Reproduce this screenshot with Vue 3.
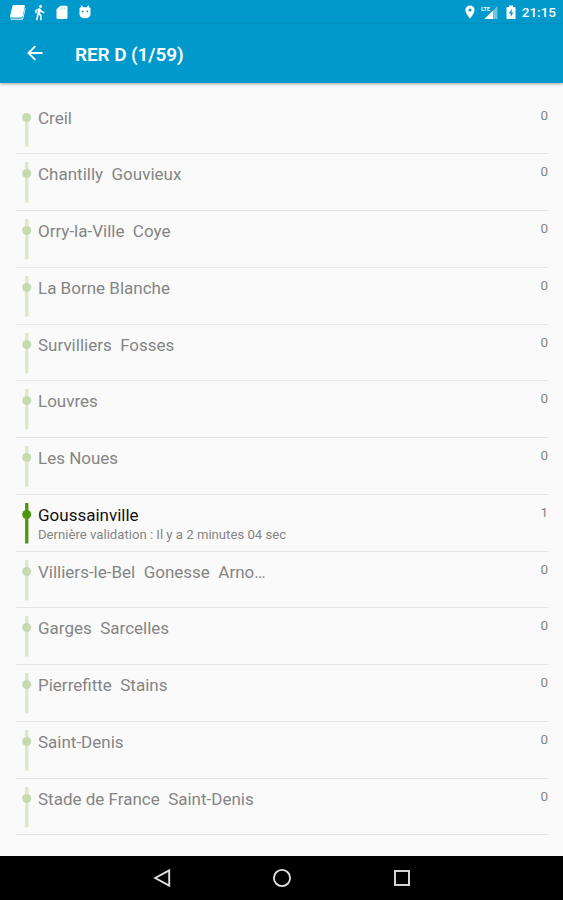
<template>
  <div class="screen">
    <div class="status-bar">
      <div class="status-left">
        <svg class="ic-book" viewBox="0 0 17 17">
          <path d="M4.6 1h10.200q1.200 0 1 1.200l-2.200 10.400q-.3 1-1.300 1H2q-1.200 0-1-1.200L3.400 2q.2-1 1.200-1z" fill="#fff"/>
          <path d="M16 3.400l-2.300 10.100q-.4 1.300-1.600 1.300H1.400q.2 1 1.200 1h10.200q1.200 0 1.500-1.200l2.300-10q.2-.8-.6-1.200z" fill="#eaf6fb"/>
          <path d="M1.600 14h10.600q1 0 1.300-1" fill="none" stroke="#8acce6" stroke-width=".7"/>
        </svg>
        <svg class="ic-walk" viewBox="0 0 24 24" fill="#fff">
          <path d="M13.500 5.500c1.100 0 2-.9 2-2s-.9-2-2-2-2 .9-2 2 .9 2 2 2zM9.800 8.900L7 23h2.100l1.800-8 2.100 2v6h2v-7.500l-2.100-2 .6-3C14.800 12 16.800 13 19 13v-2c-1.900 0-3.500-1-4.300-2.400l-1-1.600c-.4-.6-1-1-1.700-1-.3 0-.5.100-.8.100L6 8.300V13h2V9.600l1.800-.7"/>
        </svg>
        <svg class="ic-sd" viewBox="0 0 12 15">
          <path d="M4.200.8h6q1.300 0 1.300 1.300v10.600q0 1.300-1.300 1.300H1.800Q.5 14 .5 12.700V4.500z" fill="#fff"/>
          <path d="M4.600 2.400v2M6.700 2.400v2M8.800 2.400v2" stroke="#8acce6" stroke-width=".8"/>
        </svg>
        <svg class="ic-droid" viewBox="0 0 12 14">
          <path d="M2.300.6l1.300 2.200M9.700.6L8.400 2.800" stroke="#fff" stroke-width="1.300"/>
          <path d="M.5 3.600Q.8 2.300 2.300 2.300h7.400q1.500 0 1.800 1.300v6Q11 13.200 6 13.200T.5 9.600z" fill="#fff"/>
          <circle cx="3.700" cy="6.400" r=".9" fill="#0099cc"/>
          <circle cx="8.300" cy="6.400" r=".9" fill="#0099cc"/>
        </svg>
      </div>
      <div class="status-right">
        <svg class="ic-pin" viewBox="0 0 10 14">
          <path d="M5 .4C2.400.4.4 2.400.4 5c0 3.300 4.600 8.600 4.600 8.600S9.600 8.300 9.600 5C9.600 2.400 7.600.4 5 .4z" fill="#fff"/>
          <circle cx="5" cy="5" r="1.600" fill="#0099cc"/>
        </svg>
        <svg class="ic-signal" viewBox="0 0 17 15">
          <path d="M16.500 1v13h-13z" fill="#6cc2e1"/>
          <path d="M12 5.500V14H3.500z" fill="#fff"/>
          <text x="0" y="5.600">LTE</text>
        </svg>
        <svg class="ic-battery" viewBox="0 0 10 15">
          <path d="M3 .6h4V2h1.700q.8 0 .8.8v10.400q0 .8-.8.800H1.300q-.8 0-.8-.8V2.800q0-.8.800-.8H3z" fill="#fff"/>
          <path d="M5.700 4L2.800 8.500h1.900V12l2.700-4.600H5.700z" fill="#0099cc"/>
        </svg>
        <span class="clock">21:15</span>
      </div>
    </div>

    <header class="toolbar">
      <button class="back" aria-label="Retour">
        <svg viewBox="0 0 16 16" fill="none" stroke="#fff" stroke-width="1.900">
          <path d="M15.500 8H1.800M8.300 1.200L1.500 8l6.800 6.800"/>
        </svg>
      </button>
      <h1>RER D (1/59)</h1>
    </header>

    <ul class="stations">
      <li
        v-for="(s, i) in stations"
        :key="s.name"
        class="station"
        :class="{ visited: s.count > 0 }"
      >
        <!-- the line starts at the first stop, so no rail above it -->
        <svg class="track" viewBox="0 0 10 56">
          <rect x="3.100" :y="i === 0 ? 19.500 : 8" width="3.300" :height="i === 0 ? 29 : 40.500" class="rail"/>
          <circle cx="4.700" cy="19.500" r="4.500" class="stop"/>
        </svg>
        <div class="info">
          <span class="name">{{ s.name }}</span>
          <span v-if="s.last" class="last">Dernière validation : {{ s.last }}</span>
        </div>
        <span class="count">{{ s.count }}</span>
      </li>
    </ul>

    <nav class="nav-bar">
      <svg viewBox="0 0 20 20"><path d="M17.200 2.300v15.400L3.200 10z"/></svg>
      <svg viewBox="0 0 20 20"><circle cx="10" cy="10" r="8.100"/></svg>
      <svg viewBox="0 0 20 20"><rect x="3" y="3" width="14" height="14"/></svg>
    </nav>
  </div>
</template>

<script setup>
const stations = [
  { name: 'Creil', count: 0 },
  { name: 'Chantilly  Gouvieux', count: 0 },
  { name: 'Orry-la-Ville  Coye', count: 0 },
  { name: 'La Borne Blanche', count: 0 },
  { name: 'Survilliers  Fosses', count: 0 },
  { name: 'Louvres', count: 0 },
  { name: 'Les Noues', count: 0 },
  { name: 'Goussainville', count: 1, last: 'Il y a 2 minutes 04 sec' },
  { name: 'Villiers-le-Bel  Gonesse  Arno…', count: 0 },
  { name: 'Garges  Sarcelles', count: 0 },
  { name: 'Pierrefitte  Stains', count: 0 },
  { name: 'Saint-Denis', count: 0 },
  { name: 'Stade de France  Saint-Denis', count: 0 },
]
</script>

<style>
body {
  margin: 0;
}
</style>

<style scoped>
.screen {
  display: flex;
  flex-direction: column;
  width: 563px;
  height: 900px;
  overflow: hidden;
  background: #fafafa;
  font-family: Roboto, "Noto Sans", sans-serif;
}
.status-bar {
  display: flex;
  justify-content: space-between;
  align-items: center;
  box-sizing: border-box;
  height: 24px;
  padding: 0 7px 0 9px;
  background: #0099cc;
}
.status-left,
.status-right {
  display: flex;
  align-items: center;
}
.ic-book { width: 17px; height: 17px; }
.ic-walk { width: 17px; height: 17px; margin-left: 5px; }
.ic-sd { width: 12px; height: 15px; margin-left: 8px; }
.ic-droid { width: 12px; height: 14px; margin-left: 11px; }
.ic-pin { width: 10px; height: 14px; }
.ic-signal { width: 17px; height: 15px; margin-left: 6px; }
.ic-signal text {
  fill: #e6f5fa;
  font-size: 6px;
  font-weight: 700;
  letter-spacing: -0.3px;
}
.ic-battery { width: 10px; height: 15px; margin-left: 8px; }
.clock {
  margin-left: 6px;
  color: #fff;
  font-size: 13.5px;
  font-weight: 500;
}

.toolbar {
  position: relative;
  display: flex;
  align-items: center;
  box-sizing: border-box;
  height: 59px;
  padding-bottom: 1px;
  flex: none;
  background: #0099cc;
  box-shadow: 0 1px 3px rgba(0, 0, 0, 0.35);
}
.back {
  width: 16px;
  height: 16px;
  margin: 0 0 0 27px;
  padding: 0;
  border: 0;
  background: none;
}
.back svg {
  display: block;
}
.toolbar h1 {
  margin: 2px 0 0 32px;
  color: #fff;
  font-size: 19px;
  font-weight: 600;
  letter-spacing: -0.1px;
}

.stations {
  flex: 1;
  margin: 0;
  padding: 14.5px 15px 0 16px;
  list-style: none;
}
.station {
  display: flex;
  box-sizing: border-box;
  height: 56.75px;
  border-bottom: 1px solid #e3e4e4;
  color: #858585;
}
.track {
  flex: none;
  width: 10px;
  height: 56px;
  margin-left: 6px;
}
.rail { fill: #d9e7cb; }
.stop { fill: #c5dab0; }
.visited .rail,
.visited .stop {
  fill: #4f960f;
}
.info {
  display: flex;
  flex-direction: column;
  flex: 1;
  margin-left: 6px;
  padding-top: 10px;
}
.name {
  font-size: 17px;
  line-height: 20px;
  white-space: pre;
}
.visited .name { color: #111; }
.last {
  font-size: 13.15px;
  line-height: 16px;
  margin-top: 2px;
}
.count {
  padding-top: 9px;
  font-size: 13.5px;
  line-height: 16px;
}

.nav-bar {
  display: flex;
  justify-content: center;
  align-items: center;
  gap: 100px;
  height: 44px;
  flex: none;
  background: #000;
}
.nav-bar svg {
  width: 20px;
  height: 20px;
  fill: none;
  stroke: #dedede;
  stroke-width: 1.9;
}
</style>
